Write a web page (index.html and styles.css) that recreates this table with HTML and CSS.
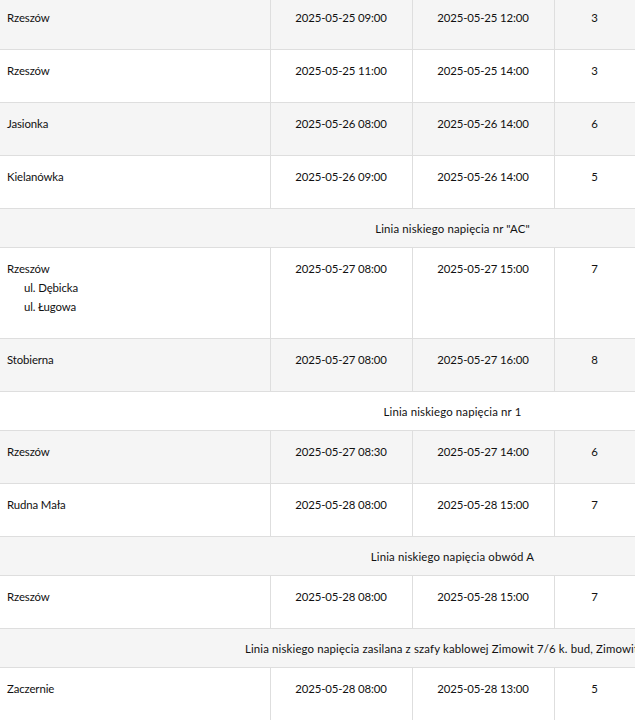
FILE: index.html
```html
<!DOCTYPE html>
<html lang="pl">
<head>
<meta charset="utf-8">
<title>Wyłączenia</title>
<link rel="stylesheet" href="styles.css">
</head>
<body>
<table class="outages">
  <colgroup>
    <col class="c-place"><col class="c-time"><col class="c-time"><col class="c-num">
  </colgroup>
  <tbody>
    <tr><td class="place">Rzeszów</td><td>2025-05-25 09:00</td><td>2025-05-25 12:00</td><td>3</td></tr>
    <tr><td class="place">Rzeszów</td><td>2025-05-25 11:00</td><td>2025-05-25 14:00</td><td>3</td></tr>
    <tr><td class="place">Jasionka</td><td>2025-05-26 08:00</td><td>2025-05-26 14:00</td><td>6</td></tr>
    <tr><td class="place">Kielanówka</td><td>2025-05-26 09:00</td><td>2025-05-26 14:00</td><td>5</td></tr>
    <tr class="group"><td></td><td colspan="3"><div class="gtitle"><span>Linia niskiego napięcia nr "AC"</span></div></td></tr>
    <tr><td class="place">Rzeszów<ul class="streets"><li>ul. Dębicka</li><li>ul. Ługowa</li></ul></td><td>2025-05-27 08:00</td><td>2025-05-27 15:00</td><td>7</td></tr>
    <tr><td class="place">Stobierna</td><td>2025-05-27 08:00</td><td>2025-05-27 16:00</td><td>8</td></tr>
    <tr class="group"><td></td><td colspan="3"><div class="gtitle"><span>Linia niskiego napięcia nr 1</span></div></td></tr>
    <tr><td class="place">Rzeszów</td><td>2025-05-27 08:30</td><td>2025-05-27 14:00</td><td>6</td></tr>
    <tr><td class="place">Rudna Mała</td><td>2025-05-28 08:00</td><td>2025-05-28 15:00</td><td>7</td></tr>
    <tr class="group"><td></td><td colspan="3"><div class="gtitle"><span>Linia niskiego napięcia obwód A</span></div></td></tr>
    <tr><td class="place">Rzeszów</td><td>2025-05-28 08:00</td><td>2025-05-28 15:00</td><td>7</td></tr>
    <tr class="group"><td></td><td colspan="3"><div class="gtitle"><span>Linia niskiego napięcia zasilana z szafy kablowej Zimowit 7/6 k. bud, Zimowit 7/8</span></div></td></tr>
    <tr><td class="place">Zaczernie</td><td>2025-05-28 08:00</td><td>2025-05-28 13:00</td><td>5</td></tr>
  </tbody>
</table>
</body>
</html>
```
FILE: styles.css
```css
html, body {
  margin: 0;
  padding: 0;
  overflow: hidden;
  background: #fff;
}

body {
  font-family: Lato, "Noto Sans", sans-serif;
  font-size: 11.4px;
  letter-spacing: -0.12px;
  line-height: 19px;
  color: #111;
}

.outages {
  margin-top: -4px;
  border-collapse: collapse;
  table-layout: fixed;
  width: 635px;
}

.c-place { width: 270px; }
.c-time { width: 142px; }
.c-num { width: 81px; }

.outages td {
  border: 1px solid #dedede;
  padding: 11px 7px 22px;
  text-align: center;
  vertical-align: top;
}

.outages td:first-child {
  border-left: none;
}

.outages td.place {
  text-align: left;
}

.outages tr:nth-child(odd) {
  background: #f5f5f5;
}

.outages tr:nth-child(even) {
  background: #fff;
}

.streets {
  list-style: none;
  margin: 0;
  padding: 0 0 0 17px;
}

.outages tr.group td {
  border-left: none;
  border-right: none;
  padding: 10px 0 9px;
}

.gtitle {
  display: flex;
  justify-content: center;
  white-space: nowrap;
  letter-spacing: 0.15px;
}
```
